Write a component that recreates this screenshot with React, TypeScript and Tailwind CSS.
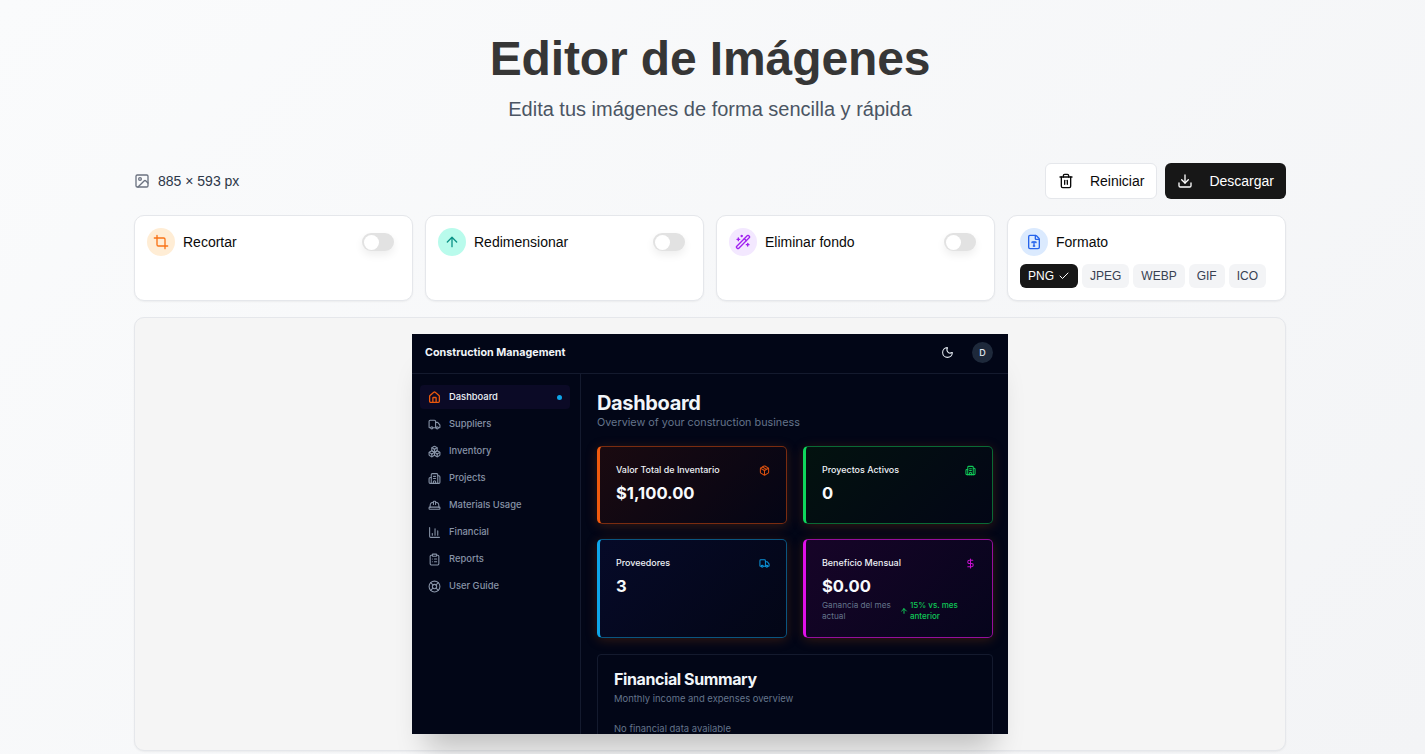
import { ArrowUp, Building2, Check, ClipboardList, Crop, DollarSign, Download, FileType, HardHat, Home, Image as ImageIcon, LifeBuoy, Moon, Package, Boxes, BarChart3, Trash2, Truck, WandSparkles, type LucideIcon } from "lucide-react";

const nav: [string, LucideIcon][] = [
  ["Suppliers", Truck],
  ["Inventory", Boxes],
  ["Projects", Building2],
  ["Materials Usage", HardHat],
  ["Financial", BarChart3],
  ["Reports", ClipboardList],
  ["User Guide", LifeBuoy],
];

function Toggle() {
  return (
    <div className="w-[32px] h-[18px] rounded-full bg-[#e2e2e2] p-[1.5px] shadow-[0_4px_8px_rgba(0,0,0,0.07)]">
      <div className="w-[15px] h-[15px] rounded-full bg-white" />
    </div>
  );
}

function ToolCard({ icon: Icon, label, bg, color }: { icon: LucideIcon; label: string; bg: string; color: string }) {
  return (
    <div className="h-[86px] rounded-[10px] border border-[#e5e7eb] bg-white px-3 py-3 shadow-[0_1px_2px_rgba(0,0,0,0.05)]">
      <div className="flex items-center justify-between pr-[6px]">
        <div className="flex items-center gap-2">
          <div className={`flex h-[28px] w-[28px] items-center justify-center rounded-full ${bg}`}>
            <Icon className={`h-4 w-4 ${color}`} strokeWidth={2} />
          </div>
          <span className="text-[14px] text-[#0a0a0a]">{label}</span>
        </div>
        <Toggle />
      </div>
    </div>
  );
}

function Stat({ title, value, icon: Icon, border, left, color, tint, tall, children }: { title: string; value: string; icon: LucideIcon; border: string; left: string; color: string; tint: string; tall?: boolean; children?: React.ReactNode }) {
  return (
    <div className={`${tall ? "h-[99px]" : "h-[78px]"} rounded-[5px] border border-l-[3px] ${border} ${left} ${tint} px-[16px] pt-[16px] shadow-[0_2px_12px_rgba(170,70,10,0.3)]`}>
      <div className="flex items-center justify-between">
        <span className="text-[8.95px] leading-[14px] font-medium text-[#eef2f7]">{title}</span>
        <Icon className={`h-[11px] w-[11px] ${color}`} strokeWidth={2.2} />
      </div>
      <div className="mt-[5px] text-[16.6px] leading-[22px] font-bold text-[#f8fafc]">{value}</div>
      {children}
    </div>
  );
}

function Shot() {
  return (
    <div className="flex h-[400px] w-[596px] flex-col overflow-hidden bg-[#020617] font-['Inter',sans-serif] shadow-[0_28px_28px_-14px_rgba(0,0,0,0.22)]">
      <div className="flex h-[40px] shrink-0 items-center justify-between border-b border-[#141a2e] pb-[2px] pl-[13px] pr-[15px]">
        <span className="mt-[2px] text-[10.75px] font-bold text-[#f1f5f9]">Construction Management</span>
        <div className="flex items-center gap-[18px]">
          <Moon className="h-[13px] w-[13px] text-[#e2e8f0]" />
          <div className="flex h-[21px] w-[21px] items-center justify-center rounded-full bg-[#1e293b] text-[9px] font-medium text-[#e2e8f0]">D</div>
        </div>
      </div>
      <div className="flex min-h-0 flex-1">
        <div className="w-[169px] shrink-0 border-r border-[#141a2e] pl-[8px] pr-[10px] pt-[11px]">
          <div className="flex h-[24px] items-center gap-[8px] rounded-[4px] bg-[#0b0a26] pl-[8px] pr-[8px]">
            <Home className="h-[13px] w-[13px] text-[#ea580c]" strokeWidth={2.4} />
            <span className="flex-1 text-[9.4px] font-medium text-[#eef2f7]">Dashboard</span>
            <span className="h-[5px] w-[5px] rounded-full bg-[#0ea5e9]" />
          </div>
          <div className="mt-[3px] flex flex-col gap-[3px]">
            {nav.map(([label, Icon]) => (
              <div key={label} className="flex h-[24px] items-center gap-[8px] pl-[8px]">
                <Icon className="h-[13px] w-[13px] text-[#8894a8]" />
                <span className="text-[9.4px] font-medium text-[#8894a8]">{label}</span>
              </div>
            ))}
          </div>
        </div>
        <div className="min-w-0 flex-1 pl-[16px] pr-[15px] pt-[15px]">
          <div className="mb-[-1px] text-[20px] leading-[28px] font-bold tracking-[-0.35px] text-[#f1f5f9]">Dashboard</div>
          <div className="text-[10.8px] leading-[14px] text-[#64748b]">Overview of your construction business</div>
          <div className="mt-[16px] grid grid-cols-2 gap-x-[16px] gap-y-[15px]">
            <Stat title="Valor Total de Inventario" value="$1,100.00" icon={Package} border="border-[#7a2c10]" left="border-l-[#f05a0e]" color="text-[#d9500f]" tint="bg-[linear-gradient(135deg,#1a0a10,#040515)]" />
            <Stat title="Proyectos Activos" value="0" icon={Building2} border="border-[#0a6a35]" left="border-l-[#0fd65c]" color="text-[#0fc957]" tint="bg-[linear-gradient(135deg,#03120f,#030616)]" />
            <Stat tall title="Proveedores" value="3" icon={Truck} border="border-[#0a5580]" left="border-l-[#0ea5e9]" color="text-[#0b93d8]" tint="bg-[linear-gradient(135deg,#060a28,#030616)]" />
            <Stat tall title="Beneficio Mensual" value="$0.00" icon={DollarSign} border="border-[#960e9c]" left="border-l-[#e010e8]" color="text-[#c80fd0]" tint="bg-[linear-gradient(135deg,#170428,#06051c)]">
              <div className="mt-[3px] flex items-center gap-[2px] text-[8.2px] leading-[11px]">
                <span className="w-[76px] shrink-0 text-[#64748b]">Ganancia del mes actual</span>
                <ArrowUp className="h-[8px] w-[8px] shrink-0 text-[#0fc957]" strokeWidth={3} />
                <span className="text-[8px] font-medium text-[#0fc957]">15% vs. mes anterior</span>
              </div>
            </Stat>
          </div>
          <div className="mt-[16px] h-[120px] rounded-[4px] border border-[#141a2e] px-[16px] pt-[14px]">
            <div className="text-[16px] leading-[20px] font-bold tracking-[-0.4px] text-[#f1f5f9]">Financial Summary</div>
            <div className="mt-[3px] text-[9.45px] leading-[14px] text-[#64748b]">Monthly income and expenses overview</div>
            <div className="mt-[16px] text-[9.45px] leading-[14px] text-[#64748b]">No financial data available</div>
          </div>
        </div>
      </div>
    </div>
  );
}

export default function App() {
  return (
    <div className="h-[754px] overflow-hidden bg-[linear-gradient(135deg,#fafbfc,#f3f4f6)] pr-[5px] font-['Liberation_Sans',Arial,sans-serif]">
      <div className="mx-auto w-[1152px] pt-[33px]">
        <div className="text-center">
          <h1 className="text-[48px] leading-[52px] font-bold tracking-[-0.12px] text-[#363636]">Editor de Imágenes</h1>
          <p className="mt-[10px] text-[20px] leading-[28px] text-[#4b5563]">Edita tus imágenes de forma sencilla y rápida</p>
        </div>
        <div className="mt-[40px] flex h-[36px] items-center justify-between">
          <div className="flex items-center gap-[8px] text-[14px] text-[#2d3748]">
            <ImageIcon className="h-4 w-4 text-[#6b7280]" />
            <span>885 × 593 px</span>
          </div>
          <div className="flex gap-[8px]">
            <button className="flex h-[36px] items-center gap-[16px] rounded-[6px] border border-[#e5e7eb] bg-white px-[12px] text-[14px] text-[#0a0a0a]">
              <Trash2 className="h-4 w-4" />
              Reiniciar
            </button>
            <button className="flex h-[36px] items-center gap-[16px] rounded-[6px] bg-[#171717] px-[12px] text-[14px] text-white">
              <Download className="h-4 w-4" />
              Descargar
            </button>
          </div>
        </div>
        <div className="mt-[16px] grid grid-cols-4 gap-[12px]">
          <ToolCard icon={Crop} label="Recortar" bg="bg-[#ffedd5]" color="text-[#f97316]" />
          <ToolCard icon={ArrowUp} label="Redimensionar" bg="bg-[#b9fbec]" color="text-[#0d9488]" />
          <ToolCard icon={WandSparkles} label="Eliminar fondo" bg="bg-[#f3e8ff]" color="text-[#a020f0]" />
          <div className="h-[86px] rounded-[10px] border border-[#e5e7eb] bg-white px-3 pt-3 shadow-[0_1px_2px_rgba(0,0,0,0.05)]">
            <div className="flex items-center gap-2">
              <div className="flex h-[28px] w-[28px] items-center justify-center rounded-full bg-[#dbeafe]">
                <FileType className="h-4 w-4 text-[#2563eb]" />
              </div>
              <span className="text-[14px] text-[#0a0a0a]">Formato</span>
            </div>
            <div className="mt-[8px] flex gap-[4px] text-[12px]">
              <span className="flex h-[24px] items-center gap-[4px] rounded-[6px] bg-[#171717] px-[8px] text-white">PNG <Check className="h-3 w-3" /></span>
              {["JPEG", "WEBP", "GIF", "ICO"].map((f) => (
                <span key={f} className="flex h-[24px] items-center rounded-[6px] bg-[#f3f4f6] px-[8px] text-[#374151]">{f}</span>
              ))}
            </div>
          </div>
        </div>
        <div className="mt-[16px] flex h-[434px] justify-center rounded-[10px] border border-[#e5e7eb] bg-[#f5f5f5] pt-[16px] shadow-[0_1px_2px_rgba(0,0,0,0.05)]">
          <Shot />
        </div>
      </div>
    </div>
  );
}
